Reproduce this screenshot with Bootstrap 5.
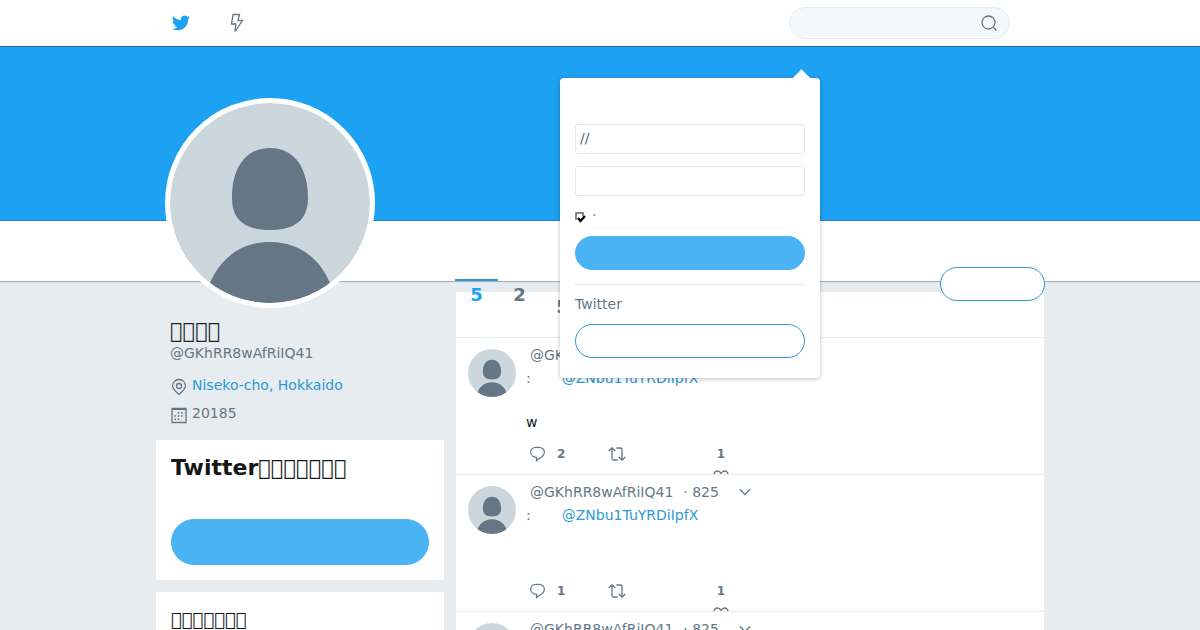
<!DOCTYPE html>
<html lang="ja">
<head>
<meta charset="utf-8">
<meta name="viewport" content="width=device-width, initial-scale=1">
<title>@GKhRR8wAfRiIQ41 | Twitter</title>
<link rel="stylesheet" href="https://cdn.jsdelivr.net/npm/bootstrap@5.3.0/dist/css/bootstrap.min.css">
<style>
:root { --tw-blue: #1da1f2; --tw-link: #2b9ad6; --tw-soft: #4ab3f4; --tw-gray: #657786; --tw-line: #e6ecf0; }
body { font-family: "DejaVu Sans", sans-serif; font-size: 14px; line-height: 22px; color: #14171a; background: #e6ecf0; }
a { color: #1b95e0; text-decoration: none; }
.tw-gray, .tw-gray a { color: var(--tw-gray); }
.tw-gray a.tw-link { color: var(--tw-link); }
.tw-wrap { max-width: 888px; }
.tw-top { height: 46px; background: #fff; }
.tw-bolt { margin-left: 40px; }
.tw-icon { fill: none; stroke: var(--tw-gray); stroke-width: 1.3; display: block; }
.tw-search { width: 221px; height: 32px; border: 1px solid var(--tw-line); border-radius: 16px; background: #f5f8fa; margin-right: 34px; padding: 0 10px 0 16px; }
.tw-search input { background: none; border: 0; outline: 0; min-width: 0; }
.tw-cover { height: 175px; background: var(--tw-blue); border-top: 1px solid #2d6c99; border-bottom: 1px solid #1c83c4; }
.tw-bar { height: 60px; background: #fff; box-shadow: 0 1px 1px rgba(0,0,0,.25); }
.tw-side { width: 288px; flex: none; }
.tw-face { width: 210px; height: 210px; margin: -183px 0 0 9px; border: 5px solid #fff; border-radius: 50%; overflow: hidden; background: #fff; position: relative; }
.tw-face svg, .tw-mini svg { width: 100%; height: 100%; display: block; border-radius: 50%; }
.tw-info { padding: 11px 14px 0; }
.tw-box { font-size: 21px; font-weight: 400; }
.tw-name { font-size: 21px; line-height: 24px; margin: 0; }
.tw-name + div { margin-top: -1px; }
.tw-head { font-size: 21px; line-height: 24px; font-weight: 700; margin: 0; }
.tw-head { font-size: 22px; }
.tw-sub { font-size: 18px; line-height: 24px; font-weight: 400; margin: 0; }
.tw-fact { gap: 4px; margin-top: 10px; }
.tw-fact + .tw-fact { margin-top: 6px; }
.tw-panel { background: #fff; padding: 16px 15px 15px; margin-bottom: 12px; }
.tw-pill { display: block; width: 100%; border-radius: 23px; border: 1px solid var(--tw-soft); background: var(--tw-soft); height: 34px; }
.tw-pill.tall { height: 46px; margin-top: 39px; }
.tw-pill.line { background: #fff; border-color: var(--tw-link); }
.tw-tabs { top: -2px; left: -1px; z-index: 2; font-size: 18px; line-height: 28px; font-weight: 700; }
.tw-tabs a { display: block; width: 43px; text-align: center; color: var(--tw-gray); border-top: 2px solid transparent; }
.tw-tabs a.active { color: var(--tw-blue); border-color: var(--tw-link); }
.tw-follow { width: 105px; top: -14px; right: -1px; z-index: 2; }
.tw-feed { margin-top: 11px; background: #fff; padding-top: 45px; }
.tw-post { height: 137px; border-top: 1px solid var(--tw-line); padding: 0 12px; gap: 10px; overflow: hidden; }
.tw-mini { width: 48px; height: 48px; flex: none; margin-top: 11px; }
.tw-body { padding-top: 5px; }
.tw-meta { height: 24px; padding-left: 4px; gap: 10px; }
.tw-meta svg { margin-left: 6px; }
.tw-to { gap: 31px; }
.tw-words { height: 44px; padding-top: 22px; margin: 0 0 10px; }
.tw-acts { font-size: 12px; font-weight: 700; color: var(--tw-gray); display: grid; grid-template-columns: 78px 99px 28px; padding-left: 4px; }
.tw-acts button { all: unset; display: flex; align-items: center; gap: 12px; height: 22px; cursor: pointer; }
.tw-acts .tw-like { flex-direction: column; gap: 5px; }
.tw-like svg { flex: none; }
.tw-acts .tw-like { justify-content: flex-start; }
.tw-pop { width: 260px; top: 78px; right: 224px; z-index: 5; background: #fff; border-radius: 4px; padding: 46px 15px 20px; box-shadow: 0 1px 4px rgba(0,0,0,.25); }
.tw-pop::before { content: ""; position: absolute; right: 12px; top: -6px; width: 13px; height: 13px; background: #fff; transform: rotate(45deg); }
.tw-field { display: block; width: 100%; height: 30px; border: 1px solid #e1e8ed; border-radius: 3px; padding: 0 4px 2px; margin-bottom: 12px; color: var(--tw-gray); }
.tw-field::placeholder { color: #536471; opacity: 1; }
.tw-keep { height: 28px; gap: 6px; line-height: 14px; }
.tw-tick { appearance: none; width: 11px; height: 11px; margin: 4px 0 0; border: 0; background: url("data:image/svg+xml,%3Csvg xmlns='http://www.w3.org/2000/svg' viewBox='0 0 11 11'%3E%3Cpath d='M1 8V1h7v3' fill='none' stroke='%23666' stroke-width='1.5'/%3E%3Cpath d='M3 6l2.5 3L10 4' fill='none' stroke='%23000' stroke-width='2.4'/%3E%3C/svg%3E"); }
.tw-new { border-top: 1px solid #e1e8ed; margin-top: 14px; padding-top: 8px; }
.tw-new p { margin: 0 0 9px; }
</style>
</head>
<body>
<svg width="0" height="0" class="position-absolute" aria-hidden="true">
  <symbol id="person" viewBox="0 0 200 200"><path fill="#ccd6dd" d="M0 0h200v200H0z"/><path fill="#657786" d="M100 45c26 0 38 22 38 50 0 22-13 32-38 32s-38-10-38-32c0-28 12-50 38-50zM34 200c7-37 31-61 66-61s59 24 66 61z"/></symbol>
  <symbol id="reply" viewBox="0 0 16 16"><path d="M6.500 1h3C13 1 15.300 3.200 15.300 6s-2 4.700-4.800 6.500L7 15v-3.500C3.300 11.500.700 9.300.700 6.200S3 1 6.500 1z"/></symbol>
  <symbol id="retweet" viewBox="0 0 18 14"><path d="M.7 4L4 .8 7.300 4M4 1v10.200c0 1 .5 1.800 1.600 1.800h4M17.300 10L14 13.200 10.700 10M14 13V2.800C14 1.800 13.500 1 12.400 1h-4"/></symbol>
  <symbol id="heart" viewBox="0 0 16 14"><path d="M8 3.500C7 1.700 5.800 1 4.500 1 2.500 1 1 2.500 1 4.700 1 8 5 11 8 13c3-2 7-5 7-8.300C15 2.500 13.500 1 11.500 1 10.200 1 9 1.700 8 3.500z"/></symbol>
  <symbol id="caret" viewBox="0 0 12 8"><path d="M.8 1.200L6 6.500l5.200-5.300"/></symbol>
</svg>

<header class="tw-top">
  <div class="tw-wrap mx-auto h-100 position-relative d-flex align-items-center">
    <a href="#" class="ms-3" aria-label="Twitter"><svg class="d-block" width="18" height="18" viewBox="0 0 24 24" fill="#1da1f2"><path d="M23.950 4.570a10 10 0 0 1-2.820.770 4.960 4.960 0 0 0 2.160-2.720 9.900 9.900 0 0 1-3.120 1.180 4.920 4.920 0 0 0-8.380 4.480C7.690 8.100 4.070 6.130 1.640 3.160a4.920 4.920 0 0 0 1.520 6.570 4.900 4.900 0 0 1-2.230-.61v.06a4.920 4.920 0 0 0 3.950 4.830 5 5 0 0 1-2.210.080 4.940 4.940 0 0 0 4.600 3.420A9.870 9.870 0 0 1 0 19.540a13.990 13.990 0 0 0 7.550 2.210c9.050 0 14-7.500 14-13.980 0-.21 0-.42-.02-.63a9.940 9.940 0 0 0 2.420-2.570z"/></svg></a>
    <a href="#" class="tw-bolt me-auto" aria-label="Moments"><svg class="tw-icon" width="14" height="20" viewBox="0 0 14 20"><path d="M3 1.500h6.500L8 7.500h4.500L5 18.500l.8-7.500H1.500z"/></svg></a>
    <form class="tw-search d-flex align-items-center">
      <input class="flex-grow-1" type="search" aria-label="Search">
      <button type="button" class="btn p-0" aria-label="Search"><svg class="tw-icon" width="17" height="16" viewBox="0 0 17 16"><circle cx="7.500" cy="7.500" r="6.500"/><path d="M12 12L15.500 15.500"/></svg></button>
    </form>
    <form class="tw-pop position-absolute tw-gray">
      <input class="tw-field" type="text" placeholder="//" aria-label="User">
      <input class="tw-field" type="password" aria-label="Password">
      <label class="tw-keep d-flex"><input class="tw-tick" type="checkbox" checked><span>·</span></label>
      <button type="button" class="tw-pill" aria-label="Log in"></button>
      <div class="tw-new"><p>Twitter</p><button type="button" class="tw-pill line" aria-label="Sign up"></button></div>
    </form>
  </div>
</header>
<div class="tw-cover"></div>
<div class="tw-bar"></div>

<main class="tw-wrap mx-auto d-flex">
  <aside class="tw-side">
    <div class="tw-face"><svg><use href="#person"/></svg></div>
    <div class="tw-info tw-gray">
      <h1 class="tw-name text-dark"><span class="tw-box">&#xE8F0;&#xE8F0;&#xE8F0;&#xE8F0;</span></h1>
      <div><a href="#">@GKhRR8wAfRiIQ41</a></div>
      <div class="tw-fact d-flex align-items-center"><svg class="tw-icon mt-1" width="18" height="18" viewBox="0 0 18 18"><path d="M9 16.500C5.500 13.500 2.500 11 2.500 7.800a6.500 6.300 0 0 1 13 0C15.500 11 12.500 13.500 9 16.500z"/><circle cx="9" cy="8" r="2.500"/></svg><a class="tw-link" href="#">Niseko-cho, Hokkaido</a></div>
      <div class="tw-fact d-flex align-items-center"><svg class="tw-icon mt-1" width="18" height="18" viewBox="0 0 18 18"><path d="M2 2.500h14v14H2z"/><path stroke-width="2" d="M2 3h14"/><path stroke-width="1.600" stroke-dasharray="1.600 1.800" d="M7.700 6.800h7M4.300 10h10M4.300 13.200h7"/></svg><span>20185</span></div>
    </div>
    <section class="tw-panel mt-3"><h2 class="tw-head">Twitter<span class="tw-box">&#xE8F0;&#xE8F0;&#xE8F0;&#xE8F0;&#xE8F0;&#xE8F0;&#xE8F0;</span></h2><button type="button" class="tw-pill tall" aria-label="Sign up"></button></section>
    <section class="tw-panel"><h2 class="tw-sub">&#xE8F0;&#xE8F0;&#xE8F0;&#xE8F0;&#xE8F0;&#xE8F0;&#xE8F0;</h2></section>
  </aside>
  <div class="flex-grow-1 position-relative ms-2 ps-1">
    <div class="position-relative">
      <nav class="tw-tabs position-absolute d-flex"><a class="active" href="#">5</a><a href="#">2</a><a class="mt-2 pt-1" href="#">5</a></nav>
      <button type="button" class="tw-pill line tw-follow position-absolute" aria-label="Follow"></button>
    </div>
    <div class="tw-feed">
      <article class="tw-post d-flex">
        <a class="tw-mini" href="#" aria-label="Profile"><svg><use href="#person"/></svg></a>
        <div class="tw-body">
          <div class="tw-meta tw-gray d-flex align-items-center"><a href="#">@GKhRR8wAfRiIQ41</a></div>
          <div class="tw-to tw-gray d-flex">:<a class="tw-link" href="#">@ZNbu1TuYRDiIpfX</a></div>
          <p class="tw-words">w</p>
          <div class="tw-acts"><button><svg class="tw-icon" width="15" height="16"><use href="#reply"/></svg>2</button><button aria-label="Retweet"><svg class="tw-icon" width="18" height="14"><use href="#retweet"/></svg></button><button class="tw-like">1<svg class="tw-icon" width="16" height="14"><use href="#heart"/></svg></button></div>
        </div>
      </article>
      <article class="tw-post d-flex">
        <a class="tw-mini" href="#" aria-label="Profile"><svg><use href="#person"/></svg></a>
        <div class="tw-body">
          <div class="tw-meta tw-gray d-flex align-items-center"><a href="#">@GKhRR8wAfRiIQ41</a><span>· 825</span><svg class="tw-icon" width="20" height="8"><use href="#caret"/></svg></div>
          <div class="tw-to tw-gray d-flex">:<a class="tw-link" href="#">@ZNbu1TuYRDiIpfX</a></div>
          <p class="tw-words"></p>
          <div class="tw-acts"><button><svg class="tw-icon" width="15" height="16"><use href="#reply"/></svg>1</button><button aria-label="Retweet"><svg class="tw-icon" width="18" height="14"><use href="#retweet"/></svg></button><button class="tw-like">1<svg class="tw-icon" width="16" height="14"><use href="#heart"/></svg></button></div>
        </div>
      </article>
      <article class="tw-post d-flex">
        <a class="tw-mini" href="#" aria-label="Profile"><svg><use href="#person"/></svg></a>
        <div class="tw-body">
          <div class="tw-meta tw-gray d-flex align-items-center"><a href="#">@GKhRR8wAfRiIQ41</a><span>· 825</span><svg class="tw-icon" width="20" height="8"><use href="#caret"/></svg></div>
        </div>
      </article>
    </div>
  </div>
</main>
<script src="https://cdn.jsdelivr.net/npm/bootstrap@5.3.0/dist/js/bootstrap.bundle.min.js"></script>
</body>
</html>
